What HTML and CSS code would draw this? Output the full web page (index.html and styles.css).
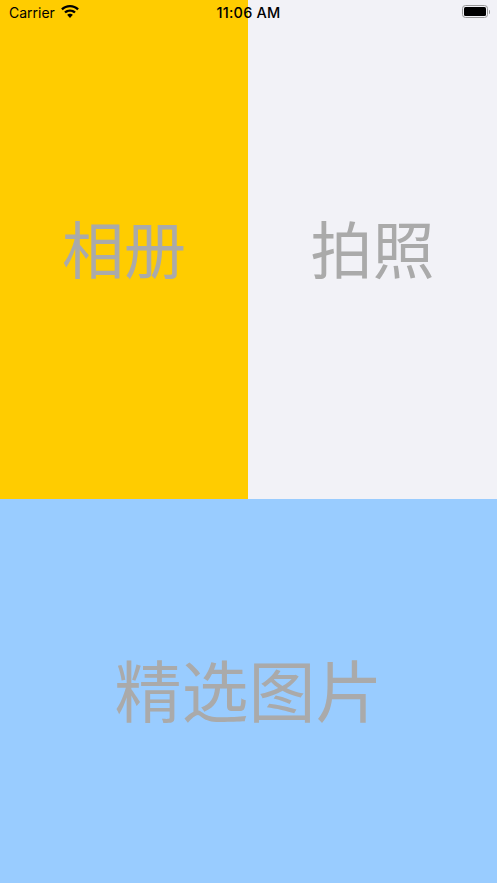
FILE: index.html
```html
<!DOCTYPE html>
<html lang="zh-CN">
  <head>
    <meta charset="UTF-8" />
    <meta name="viewport" content="width=device-width, initial-scale=1.0" />
    <title>选择图片</title>
    <link rel="stylesheet" href="styles.css">
  </head>
  <body>
    <div class="status-bar">
      <div class="status-left">
        <span class="carrier">Carrier</span>
        <svg class="wifi" width="18" height="14" viewBox="0 0 19 15">
          <path d="M9.500 0C5.800 0 2.500 1.400 0 3.800l1.700 1.800C3.700 3.600 6.500 2.500 9.500 2.500s5.800 1.100 7.800 3.100L19 3.800C16.500 1.400 13.200 0 9.500 0z"/>
          <path d="M9.500 4.700c-2.400 0-4.500.9-6.200 2.400L5 8.900c1.200-1.100 2.800-1.800 4.500-1.800s3.300.7 4.500 1.800l1.700-1.800c-1.700-1.500-3.800-2.400-6.200-2.400z"/>
          <path d="M9.500 9.300c-1.200 0-2.300.5-3.100 1.200l3.100 3.300 3.100-3.300c-.8-.7-1.900-1.200-3.100-1.200z"/>
        </svg>
      </div>
      <span class="clock">11:06 AM</span>
      <div class="battery">
        <div class="battery-body"><div class="battery-level"></div></div>
        <div class="battery-cap"></div>
      </div>
    </div>

    <div class="top-row">
      <div class="tile tile-album">相册</div>
      <div class="tile tile-camera">拍照</div>
    </div>
    <div class="tile tile-picks">精选图片</div>
  </body>
</html>
```

FILE: styles.css
```css
body {
  margin: 0;
  height: 883px;
  display: flex;
  flex-direction: column;
  overflow: hidden;
  font-family: "Noto Sans CJK SC", "Liberation Sans", sans-serif;
}

.status-bar {
  position: absolute;
  top: 0;
  left: 0;
  right: 0;
  height: 26px;
  font-family: Inter, "Liberation Sans", sans-serif;
  color: #000;
}

.status-left {
  position: absolute;
  top: 3px;
  left: 9px;
  display: flex;
  align-items: center;
  gap: 6px;
}

.carrier {
  font-size: 14px;
  line-height: 20px;
}

.wifi {
  margin-top: -3px;
}

.clock {
  position: absolute;
  top: 3px;
  left: 0;
  right: 0;
  text-align: center;
  font-size: 14.500px;
  font-weight: 500;
  letter-spacing: 0.2px;
  line-height: 20px;
}

.battery {
  position: absolute;
  top: 5px;
  right: 7px;
  display: flex;
  align-items: center;
}

.battery-body {
  box-sizing: border-box;
  width: 26px;
  height: 13px;
  padding: 1px;
  border: 1px solid #999999;
  border-radius: 3.500px;
}

.battery-level {
  height: 100%;
  background: #000;
  border-radius: 1.500px;
}

.battery-cap {
  width: 1.500px;
  height: 4px;
  margin-left: 0.500px;
  background: #999999;
  border-radius: 0 1px 1px 0;
}

.top-row {
  display: flex;
  height: 499px;
}

.tile {
  display: flex;
  align-items: center;
  justify-content: center;
  color: #aaaaaa;
  font-size: 62px;
  padding-bottom: 6px;
  box-sizing: border-box;
}

.tile-album {
  flex: 0 0 248px;
  background: #ffcc00;
}

.tile-camera {
  flex: 1;
  background: #f2f2f7;
}

.tile-picks {
  flex: 1;
  background: #99ccff;
  font-size: 67px;
  padding-bottom: 8px;
}
```
